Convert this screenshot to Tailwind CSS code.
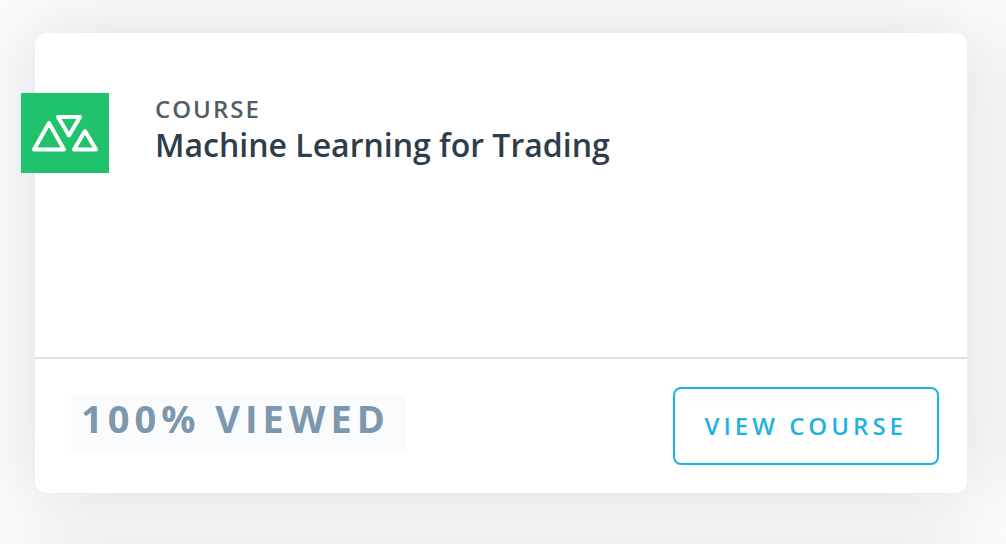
<!DOCTYPE html>
<html lang="en">
<head>
<meta charset="utf-8">
<meta name="viewport" content="width=device-width, initial-scale=1">
<title>Courses</title>
<script src="https://cdn.jsdelivr.net/npm/@tailwindcss/browser@4"></script>
</head>
<body class="h-screen overflow-hidden bg-[#fafbfd] font-['Open_Sans',sans-serif]">
<main class="grid h-screen grid-cols-[calc(100vw-74px)_200px] gap-x-14 gap-y-[52px] overflow-hidden pl-[35px] pt-[33px]">
  <article class="relative z-10 flex min-h-[460px] flex-col rounded-xl bg-white shadow-[0_0_70px_rgba(0,0,0,0.12)]">
    <div class="flex grow items-start gap-[46px] pt-15">
      <svg class="-ml-3.5 h-20 w-22 shrink-0 bg-[#20c36b]" viewBox="0 0 88 80" fill="none" stroke="#fff" stroke-width="4" stroke-linejoin="round" aria-hidden="true">
        <path d="M28 30 13 56.500H43ZM37 24H59L48 42.500ZM64 38 53 56.500H75Z"/>
      </svg>
      <div>
        <p class="text-2xl font-semibold tracking-[2px] text-[#525c65]">COURSE</p>
        <h2 class="text-[32px] leading-10 font-semibold text-[#2e3d49]">Machine Learning for Trading</h2>
      </div>
    </div>
    <footer class="flex items-start justify-between border-t-2 border-[#dbe2e8] py-7 pr-7 pl-9">
      <p class="mt-[7px] bg-[#fafbfd] pr-4 pb-2.5 pl-2.5 text-[38px] leading-12 font-bold tracking-[5px] text-[#7d97ad]">100% VIEWED</p>
      <button type="button" class="h-[78px] rounded-lg border-2 border-[#1fb1e6] px-[30px] text-2xl font-semibold tracking-[4px] text-[#1fb1e6]">VIEW COURSE</button>
    </footer>
  </article>
  <div class="rounded-xl bg-white shadow-[0_0_70px_rgba(0,0,0,0.08)]"></div>
  <div class="h-[460px] rounded-xl bg-white shadow-[0_0_70px_rgba(0,0,0,0.08)]"></div>
</main>
</body>
</html>
